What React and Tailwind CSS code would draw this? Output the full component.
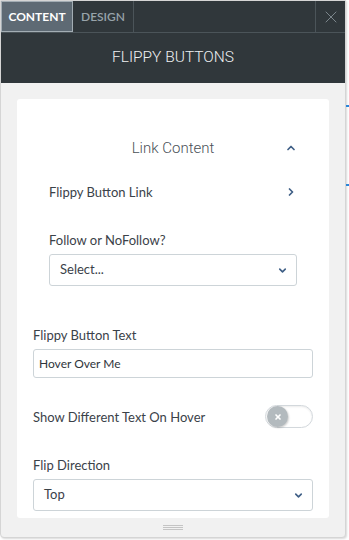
import { ChevronUp, ChevronRight, ChevronDown, X } from 'lucide-react';

const label = "text-[13px] leading-[20px] text-[#3b4249]";

const SelectBox = ({ value, className = '' }) => (
  <div className={`flex h-[32px] items-center justify-between rounded-[3px] border border-[#cdd4d8] bg-white pl-[10px] pr-[8px] ${className}`}>
    <span className="text-[13px] text-[#3b4249]">{value}</span>
    <ChevronDown className="h-[11px] w-[11px] text-[#3f5f86]" strokeWidth={3.5} />
  </div>
);

const App = () => {
  return (
    <div className="flex h-[540px] w-[349px] bg-white font-['Lato',sans-serif]">
      <div className="flex h-[538px] w-[346px] flex-col overflow-hidden rounded-b-[4px] border border-[#d5d5d5] bg-[#f1f1f1] shadow-[1px_1px_2px_rgba(0,0,0,0.15)]">
        {/* Header */}
        <header className="flex h-[82px] flex-col bg-[#30373b]">
          <div className="flex h-[32px] border-b border-[#4b5459]">
            <button className="w-[72px] border border-[#a3adb4] bg-[#5e6a74] text-[12px] font-bold text-white">
              CONTENT
            </button>
            <button className="w-[61px] border-r border-[#4b5459] text-[12px] font-semibold text-[#98a3aa]">
              DESIGN
            </button>
            <div className="flex-1" />
            <button className="flex w-[30px] items-center justify-center border-l border-[#4b5459]">
              <X className="h-[20px] w-[20px] text-[#8b969c]" strokeWidth={1} />
            </button>
          </div>
          <div className="flex flex-1 items-center justify-center pb-[1px] font-['Roboto',sans-serif] text-[15.5px] font-light text-[#eef0f2]">
            FLIPPY BUTTONS
          </div>
        </header>

        {/* Body */}
        <main className="px-4 pt-4">
          <div className="h-[419px] rounded-[3px] bg-white px-4 pt-[39px]">
            <section className="px-4">
              <div className="flex h-[20px] items-center">
                <span className="w-[12px]" />
                <span className="flex-1 text-center font-['Roboto',sans-serif] text-[15px] font-light text-[#4a5057]">
                  Link Content
                </span>
                <ChevronUp className="h-[12px] w-[12px] text-[#3f5f86]" strokeWidth={3.5} />
              </div>
              <div className="mt-[24px] flex h-[20px] items-center justify-between">
                <span className={label}>Flippy Button Link</span>
                <ChevronRight className="h-[12px] w-[12px] text-[#3f5f86]" strokeWidth={3.5} />
              </div>
              <div className={`mt-[28px] ${label}`}>Follow or NoFollow?</div>
              <SelectBox value="Select..." className="mt-[4px]" />
            </section>

            <div className={`mt-[39px] ${label}`}>Flippy Button Text</div>
            <div className="mt-[4px] flex h-[29px] items-center rounded-[3px] border border-[#cdd4d8] px-[5px] text-[12px] text-[#2f353b]">
              Hover Over Me
            </div>

            <div className="mt-[27px] flex h-[23px] items-center justify-between">
              <span className={label}>Show Different Text On Hover</span>
              <div className="flex h-[23px] w-[48px] items-center rounded-full border border-[#d3d8dc] bg-white pl-px shadow-[inset_0_1px_2px_rgba(0,0,0,0.08)]">
                <div className="flex h-[21px] w-[21px] items-center justify-center rounded-full bg-[#b3babe] shadow-[1px_1px_2px_rgba(0,0,0,0.2)]">
                  <X className="h-[8px] w-[8px] text-white" strokeWidth={5} />
                </div>
              </div>
            </div>

            <div className={`mt-[27px] ${label}`}>Flip Direction</div>
            <SelectBox value="Top" className="mt-[4px]" />
          </div>
        </main>

        {/* Resize handle */}
        <div className="flex flex-1 flex-col items-center justify-center gap-[1px]">
          <div className="h-px w-[20px] bg-[#c4c4c4]" />
          <div className="h-px w-[20px] bg-[#c4c4c4]" />
          <div className="h-px w-[20px] bg-[#c4c4c4]" />
        </div>
      </div>

      {/* Page behind the panel */}
      <div className="relative flex-1">
        <div className="absolute left-0 right-0 top-[105px] h-[2px] bg-[#2a85d8]" />
        <div className="absolute left-0 right-0 top-[184px] h-[2px] bg-[#2a85d8]" />
      </div>
    </div>
  );
};

export default App;
